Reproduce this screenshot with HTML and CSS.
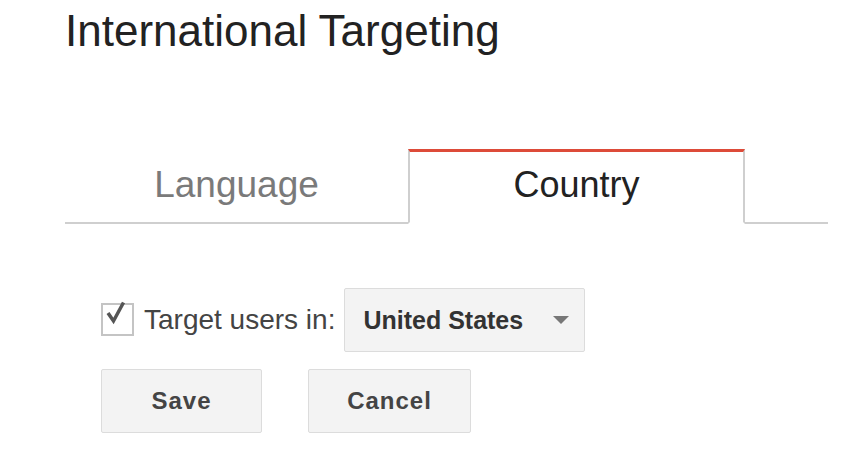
FILE: index.html
```html
<!DOCTYPE html>
<html lang="en">
<head>
    <meta charset="UTF-8">
    <title>International Targeting</title>
    <link rel="stylesheet" href="styles.css">
</head>
<body>
    <div class="page">
        <h1>International Targeting</h1>

        <!-- Tabs -->
        <div class="tabs">
            <div class="tab">Language</div>
            <div class="tab active">Country</div>
            <div class="tab-rest"></div>
        </div>

        <!-- Country form -->
        <div class="country-form">
            <div class="target-row">
                <svg class="checkbox" width="34" height="36" viewBox="0 0 34 36">
                    <rect x="1" y="4" width="31" height="31" fill="#fff" stroke="#c4c4c4" stroke-width="2"/>
                    <path d="M7 13 L12.5 21 L22.5 2.5" fill="none" stroke="#555" stroke-width="3.5" stroke-linejoin="miter"/>
                </svg>
                <span class="target-label">Target users in:</span>
                <div class="select">
                    <span>United States</span>
                    <span class="arrow"></span>
                </div>
            </div>
            <div class="actions">
                <button class="btn save">Save</button>
                <button class="btn cancel">Cancel</button>
            </div>
        </div>
    </div>
</body>
</html>
```

FILE: styles.css
```css
body {
    font-family: 'Liberation Sans', Arial, sans-serif;
    background-color: #fff;
    margin: 0;
    padding: 0;
}
.page {
    padding-left: 65px;
}
h1 {
    font-size: 44px;
    font-weight: normal;
    color: #222;
    line-height: 50px;
    margin: 6px 0 0;
}
.tabs {
    display: flex;
    width: 763px;
    margin-top: 93px;
}
.tab {
    width: 343px;
    height: 70px;
    line-height: 65px;
    text-align: center;
    font-size: 37px;
    color: #7a7a7a;
    border-bottom: 2px solid #cfcfcf;
    border-top: 3px solid transparent;
}
.tab.active {
    width: 333px;
    font-size: 36px;
    color: #222;
    background-color: #fff;
    border-top: 3px solid #dd4b39;
    border-left: 2px solid #cfcfcf;
    border-right: 2px solid #cfcfcf;
    border-bottom: 2px solid transparent;
}
.tab-rest {
    flex: 1;
    border-bottom: 2px solid #cfcfcf;
}
.country-form {
    padding-left: 36px;
    margin-top: 64px;
}
.target-row {
    display: flex;
    align-items: center;
    height: 64px;
}
.checkbox {
    margin-top: -4px;
}
.target-label {
    font-size: 28px;
    color: #444;
    margin-left: 9px;
    margin-right: 9px;
}
.select {
    display: flex;
    align-items: center;
    justify-content: space-between;
    padding: 0 15px 0 18px;
    box-sizing: border-box;
    width: 241px;
    height: 64px;
    background-color: #f3f3f3;
    border: 1px solid #dcdcdc;
    border-radius: 2px;
    font-size: 25px;
    font-weight: bold;
    color: #333;
}
.arrow {
    width: 0;
    height: 0;
    border-left: 8px solid transparent;
    border-right: 8px solid transparent;
    border-top: 8px solid #777;
}
.actions {
    display: flex;
    gap: 46px;
    margin-top: 17px;
}
.btn {
    height: 64px;
    background-color: #f3f3f3;
    border: 1px solid #dcdcdc;
    border-radius: 2px;
    font-family: 'Liberation Sans', Arial, sans-serif;
    font-size: 24px;
    font-weight: bold;
    letter-spacing: 1px;
    color: #444;
    padding: 0;
    cursor: pointer;
}
.btn.save {
    width: 161px;
}
.btn.cancel {
    width: 163px;
}
```
